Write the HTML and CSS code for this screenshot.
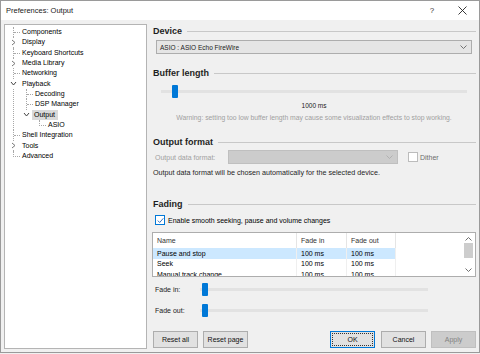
FILE: index.html
```html
<!DOCTYPE html>
<html lang="en">
<head>
    <meta charset="UTF-8">
    <title>Preferences: Output</title>
    <link rel="stylesheet" href="styles.css">
</head>
<body>
    <div class="window">
        <div class="titlebar">
            <span class="title">Preferences: Output</span>
            <span class="title-btn help">?</span>
            <span class="title-btn close">
                <svg width="9" height="9" viewBox="0 0 9 9"><path d="M0.5 0.5 L8.5 8.5 M8.5 0.5 L0.5 8.5" stroke="#222" stroke-width="0.9" fill="none"/></svg>
            </span>
        </div>

        <div class="content">
            <!-- page tree -->
            <div class="tree">
                <ul class="level">
                    <li><div class="row"><span class="conn"></span><span class="label">Components</span></div></li>
                    <li><div class="row"><span class="twisty"><svg width="5" height="7" viewBox="0 0 5 7"><path d="M1 1 L4 3.5 L1 6" stroke="#777" fill="none"/></svg></span><span class="label">Display</span></div></li>
                    <li><div class="row"><span class="conn"></span><span class="label">Keyboard Shortcuts</span></div></li>
                    <li><div class="row"><span class="twisty"><svg width="5" height="7" viewBox="0 0 5 7"><path d="M1 1 L4 3.5 L1 6" stroke="#777" fill="none"/></svg></span><span class="label">Media Library</span></div></li>
                    <li><div class="row"><span class="conn"></span><span class="label">Networking</span></div></li>
                    <li>
                        <div class="row"><span class="twisty"><svg width="7" height="5" viewBox="0 0 7 5"><path d="M1 1 L3.5 4 L6 1" stroke="#444" fill="none"/></svg></span><span class="label">Playback</span></div>
                        <ul class="level">
                            <li><div class="row"><span class="conn"></span><span class="label">Decoding</span></div></li>
                            <li><div class="row"><span class="conn"></span><span class="label">DSP Manager</span></div></li>
                            <li>
                                <div class="row"><span class="twisty"><svg width="7" height="5" viewBox="0 0 7 5"><path d="M1 1 L3.5 4 L6 1" stroke="#444" fill="none"/></svg></span><span class="label selected">Output</span></div>
                                <ul class="level">
                                    <li><div class="row"><span class="conn"></span><span class="label">ASIO</span></div></li>
                                </ul>
                            </li>
                        </ul>
                    </li>
                    <li><div class="row"><span class="conn"></span><span class="label">Shell Integration</span></div></li>
                    <li><div class="row"><span class="twisty"><svg width="5" height="7" viewBox="0 0 5 7"><path d="M1 1 L4 3.5 L1 6" stroke="#777" fill="none"/></svg></span><span class="label">Tools</span></div></li>
                    <li><div class="row"><span class="conn"></span><span class="label">Advanced</span></div></li>
                </ul>
            </div>

            <!-- output page -->
            <div class="page">
                <div class="group-title"><span>Device</span></div>
                <div class="combo device-combo">
                    <span>ASIO : ASIO Echo FireWire</span>
                    <svg width="7" height="4" viewBox="0 0 7 4"><path d="M0.5 0.5 L3.5 3.5 L6.5 0.5" stroke="#555" stroke-width="0.8" fill="none"/></svg>
                </div>

                <div class="group-title gt-buffer"><span>Buffer length</span></div>
                <div class="slider buffer-slider"><span class="thumb"></span></div>
                <div class="value">1000 ms</div>
                <div class="warning">Warning: setting too low buffer length may cause some visualization effects to stop working.</div>

                <div class="group-title gt-format"><span>Output format</span></div>
                <div class="format-row">
                    <span class="muted">Output data format:</span>
                    <div class="combo disabled">
                        <svg width="7" height="4" viewBox="0 0 7 4"><path d="M0.5 0.5 L3.5 3.5 L6.5 0.5" stroke="#aaa" stroke-width="0.8" fill="none"/></svg>
                    </div>
                    <span class="check off"></span>
                    <span class="dither">Dither</span>
                </div>
                <div class="info">Output data format will be chosen automatically for the selected device.</div>

                <div class="group-title gt-fading"><span>Fading</span></div>
                <div class="check-row">
                    <span class="check on">
                        <svg width="7" height="7" viewBox="0 0 7 7"><path d="M0.8 3.6 L2.7 5.5 L6.3 1.3" stroke="#1a5fb4" stroke-width="0.9" fill="none"/></svg>
                    </span>
                    <span>Enable smooth seeking, pause and volume changes</span>
                </div>

                <div class="list">
                    <div class="list-body">
                        <div class="list-row head">
                            <span>Name</span><span>Fade in</span><span>Fade out</span><span></span>
                        </div>
                        <div class="list-row sel">
                            <span>Pause and stop</span><span>100 ms</span><span>100 ms</span><span class="fill"></span>
                        </div>
                        <div class="list-row">
                            <span>Seek</span><span>100 ms</span><span>100 ms</span><span class="fill"></span>
                        </div>
                        <div class="list-row">
                            <span>Manual track change</span><span>100 ms</span><span>100 ms</span><span class="fill"></span>
                        </div>
                    </div>
                    <div class="scrollbar">
                        <svg width="7" height="4" viewBox="0 0 7 4"><path d="M0.5 3.5 L3.5 0.5 L6.5 3.5" stroke="#606060" stroke-width="0.9" fill="none"/></svg>
                        <span class="sb-thumb"></span>
                        <span class="sb-space"></span>
                        <svg width="7" height="4" viewBox="0 0 7 4"><path d="M0.5 0.5 L3.5 3.5 L6.5 0.5" stroke="#606060" stroke-width="0.9" fill="none"/></svg>
                    </div>
                </div>

                <div class="fade-row">
                    <span class="fade-label">Fade in:</span>
                    <div class="slider fade-slider"><span class="thumb"></span></div>
                </div>
                <div class="fade-row second">
                    <span class="fade-label">Fade out:</span>
                    <div class="slider fade-slider"><span class="thumb"></span></div>
                </div>

                <div class="buttons">
                    <button class="btn">Reset all</button>
                    <button class="btn">Reset page</button>
                    <span class="spacer"></span>
                    <button class="btn default"><span>OK</span></button>
                    <button class="btn">Cancel</button>
                    <button class="btn" disabled>Apply</button>
                </div>
            </div>
        </div>
    </div>
</body>
</html>
```

FILE: styles.css
```css
body {
    margin: 0;
    background: #f0f0f0;
    font-family: 'Liberation Sans', Arial, sans-serif;
    font-size: 7px;
    color: #000;
}

.window {
    width: 478px;
    height: 351px;
    border: 1px solid #9a9a9a;
    background: #f0f0f0;
    display: flex;
    flex-direction: column;
}

/* title bar */
.titlebar {
    height: 19px;
    background: #fff;
    display: flex;
    align-items: center;
    padding-left: 5px;
}

.title {
    font-size: 7.5px;
    color: #222;
    flex: 1;
}

.title-btn {
    width: 30px;
    text-align: center;
    font-size: 8px;
    color: #333;
}

.title-btn.close {
    display: flex;
    justify-content: center;
    margin-right: 2px;
}

.content {
    flex: 1;
    display: flex;
    padding: 4px 3px 3px 3px;
}

/* tree */
.tree {
    width: 141px;
    background: #fff;
    border: 1px solid #b4b4b4;
    padding-top: 2px;
    flex-shrink: 0;
}

.tree ul {
    list-style: none;
    margin: 0;
    padding: 0;
}

.tree > .level {
    margin-left: 8px;
}

.tree li {
    border-left: 1px dotted #a8a8a8;
}

.tree li:last-child {
    border-left-color: transparent;
}

.tree .level .level {
    margin-left: 12px;
}

.row {
    height: 10.33px;
    display: flex;
    align-items: center;
    white-space: nowrap;
}

.conn {
    width: 6px;
    height: 5px;
    align-self: flex-start;
    border-bottom: 1px dotted #a8a8a8;
    margin-right: 1px;
    flex-shrink: 0;
}

.tree li:last-child > .row .conn {
    border-left: 1px dotted #a8a8a8;
    margin-left: -1px;
}

.twisty {
    width: 9px;
    height: 9px;
    margin-left: -5px;
    margin-right: 3px;
    background: #fff;
    display: flex;
    align-items: center;
    justify-content: center;
    flex-shrink: 0;
}

.label {
    padding: 1px 1px;
    line-height: 8px;
}

.label.selected {
    background: #d9d9d9;
    margin-left: -2px;
    padding: 1px 3px 1px 2px;
}

/* right page */
.page {
    flex: 1;
    margin-left: 5px;
    padding-top: 1px;
    display: flex;
    flex-direction: column;
}

.group-title {
    height: 12px;
    display: flex;
    align-items: center;
    font-size: 9px;
    font-weight: bold;
    color: #1e1e1e;
    padding-left: 1px;
}

.group-title::after {
    content: '';
    flex: 1;
    border-top: 1px solid #c8c8c8;
    margin-left: 5px;
}

.combo {
    height: 12px;
    border: 1px solid #adadad;
    background: #e5e5e5;
    display: flex;
    align-items: center;
    justify-content: space-between;
    padding: 0 4px 0 3px;
}

.device-combo {
    margin: 3px 4px 0 4px;
    font-size: 6.5px;
    color: #222;
}

.gt-buffer {
    margin-top: 13px;
}

.slider {
    height: 13px;
    display: flex;
    align-items: center;
    background: linear-gradient(#e2e2e2, #e2e2e2) center / 100% 3px no-repeat;
}

.thumb {
    width: 6px;
    height: 13px;
    background: #0078d7;
    border-radius: 1px;
}

.buffer-slider {
    margin: 6px 9px 0 9px;
}

.buffer-slider .thumb {
    margin-left: 11px;
}

.value {
    margin-top: 3px;
    height: 10px;
    line-height: 10px;
    text-align: center;
    font-size: 6.5px;
    color: #222;
}

.warning {
    margin-top: 2px;
    height: 10px;
    line-height: 10px;
    text-align: center;
    font-size: 6.8px;
    color: #a0a0a0;
    white-space: nowrap;
}

.gt-format {
    margin-top: 13px;
}

.format-row {
    margin-top: 2px;
    height: 14px;
    display: flex;
    align-items: center;
    padding-left: 3px;
}

.muted {
    color: #a0a0a0;
    width: 73px;
}

.combo.disabled {
    width: 161px;
    background: #cccccc;
    border-color: #bfbfbf;
    justify-content: flex-end;
}

.check {
    width: 8px;
    height: 8px;
    border: 1px solid #333;
    background: #fff;
    display: flex;
    align-items: center;
    justify-content: center;
    flex-shrink: 0;
}

.check.off {
    border-color: #bcbcbc;
    margin-left: 10px;
}

.dither {
    margin-left: 2px;
    color: #6d6d6d;
}

.info {
    margin-top: 4px;
    height: 10px;
    line-height: 10px;
    padding-left: 1px;
    font-size: 7.2px;
    color: #1e1e1e;
}

.gt-fading {
    margin-top: 20px;
}

.check-row {
    margin-top: 5px;
    height: 10px;
    display: flex;
    align-items: center;
    padding-left: 3px;
    gap: 3px;
}

.check.on {
    border-color: #0078d7;
}

/* list view */
.list {
    margin-top: 7px;
    height: 43px;
    border: 1px solid #adadad;
    background: #fff;
    display: flex;
    overflow: hidden;
}

.list-body {
    flex: 1;
}

.list-row {
    display: grid;
    grid-template-columns: 144px 50px 49px 1fr;
    height: 10.5px;
    align-items: stretch;
}

.list-row span {
    display: flex;
    align-items: center;
    padding-left: 4px;
    border-right: 1px solid #efefef;
    white-space: nowrap;
    overflow: hidden;
}

.list-row span:last-child {
    border-right: none;
}

.list-row.head {
    height: 15px;
    color: #333;
}

.list-row.head span {
    border-right-color: #e5e5e5;
}

.list-row.sel span {
    background: #cce8ff;
}

.list-row.sel span.fill {
    background: transparent;
}

.scrollbar {
    width: 11px;
    margin: 0 1px 0 0;
    display: flex;
    flex-direction: column;
    align-items: center;
    padding: 4px 0 4px;
    background: #fff;
}

.sb-thumb {
    width: 9px;
    height: 15px;
    margin-top: 2px;
    background: #cdcdcd;
}

.sb-space {
    flex: 1;
}

/* fade sliders */
.fade-row {
    margin-top: 6px;
    height: 13px;
    display: flex;
    align-items: center;
    padding-left: 3px;
}

.fade-row.second {
    margin-top: 8px;
}

.fade-label {
    width: 45px;
    color: #222;
}

.fade-slider {
    width: 228px;
}

.fade-slider .thumb {
    margin-left: 2px;
}

/* buttons */
.buttons {
    margin-top: 14px;
    display: flex;
    gap: 5px;
    padding-left: 1px;
}

.spacer {
    flex: 1;
}

.btn {
    width: 45px;
    height: 17px;
    border: 1px solid #adadad;
    background: #e1e1e1;
    font-family: inherit;
    font-size: 7px;
    color: #111;
    padding: 0;
}

.btn.default {
    border: 1px solid #0078d7;
    padding: 1px;
    margin-right: 1px;
}

.btn.default span {
    display: flex;
    height: 100%;
    align-items: center;
    justify-content: center;
    outline: 1px dotted #333;
    outline-offset: -1px;
}

.btn:disabled {
    background: #cccccc;
    border-color: #bfbfbf;
    color: #838383;
}
```
